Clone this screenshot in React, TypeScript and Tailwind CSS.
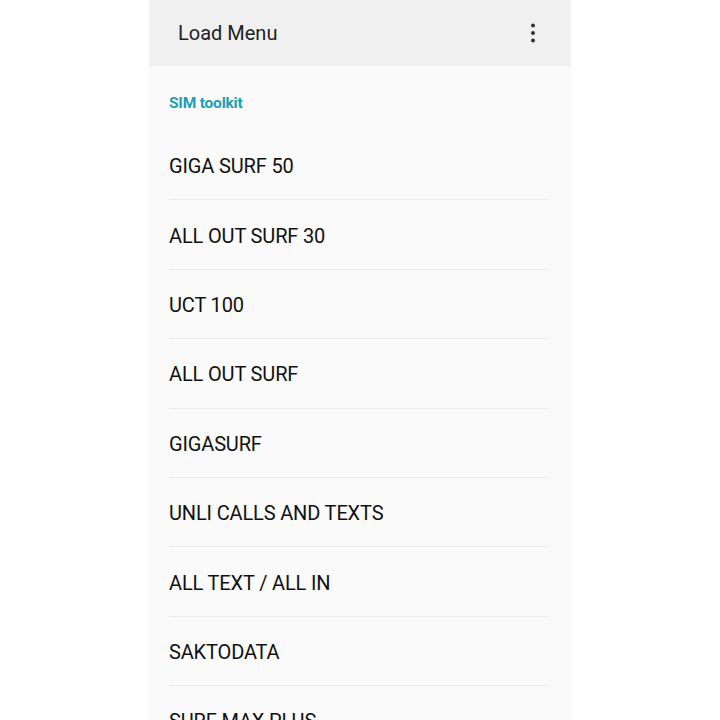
const items = [
  "GIGA SURF 50",
  "ALL OUT SURF 30",
  "UCT 100",
  "ALL OUT SURF",
  "GIGASURF",
  "UNLI CALLS AND TEXTS",
  "ALL TEXT / ALL IN",
  "SAKTODATA",
  "SURF MAX PLUS",
];

function MoreIcon() {
  return (
    <svg viewBox="0 0 8 24" className="h-[24px] w-[8px]" fill="#333">
      <circle cx="4" cy="4.5" r="2" />
      <circle cx="4" cy="12" r="2" />
      <circle cx="4" cy="19.5" r="2" />
    </svg>
  );
}

export default function App() {
  return (
    <div className="flex h-[720px] w-full justify-center overflow-hidden bg-white font-['Roboto',sans-serif]">
      <div className="flex w-[422px] flex-col bg-[#fafafa]">
        <div className="flex h-[66px] shrink-0 items-center justify-between bg-[#f0f0f0] pl-[29px] pr-[34px]">
          <span className="text-[20px] text-[#222]">Load Menu</span>
          <MoreIcon />
        </div>
        <div className="pb-[19px] pl-[20px] pt-[28px] text-[15.5px] font-bold leading-[18px] tracking-[-0.2px] text-[#1c9fb3]">
          SIM toolkit
        </div>
        <div className="flex flex-col pl-[20px] pr-[23px]">
          {items.map((label) => (
            <div
              key={label}
              className="flex h-[69.4px] shrink-0 items-center border-b border-[#ebebeb] pt-[2px] text-[20px] tracking-[-0.15px] text-[#111]"
            >
              {label}
            </div>
          ))}
        </div>
      </div>
    </div>
  );
}
